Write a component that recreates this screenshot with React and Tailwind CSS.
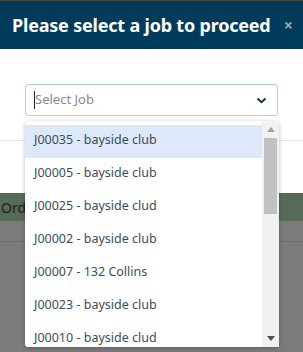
import React from "react";

const items = [
  "J00035 - bayside club",
  "J00005 - bayside club",
  "J00025 - bayside clud",
  "J00002 - bayside club",
  "J00007 - 132 Collins",
  "J00023 - bayside club",
  "J00010 - bayside clud",
];

export default function App() {
  return (
    <div className="relative w-[303px] h-[352px] overflow-hidden bg-[#7b7b7b]" style={{ fontFamily: "'Noto Sans', 'Open Sans', sans-serif" }}>
      <div className="h-px bg-[#4a473c]" />
      <div className="h-[48px] bg-[#003b5c] flex items-center justify-between pl-[12px] pr-[10px]">
        <span className="text-white font-bold text-[18px] tracking-[-0.2px] leading-none">Please select a job to proceed</span>
        <span className="text-[#9aa7b0] font-bold text-[16px] leading-none">×</span>
      </div>
      <div className="bg-white">
        <div className="h-[92px] border-b border-[#e5e5e5] pt-[35px] px-[25px]">
          <div className="h-[32px] border border-[#a6d9b5] rounded-[3px] flex items-center pl-[8px] pr-[10px]">
            <span className="w-px h-[18px] bg-[#222]" />
            <span className="text-[#8a8a8a] text-[13px] flex-1">Select Job</span>
            <svg width="11" height="7" viewBox="0 0 11 7">
              <path d="M1.5 1.5 L5.5 5.2 L9.5 1.5" stroke="#1d3347" strokeWidth="2" fill="none" />
            </svg>
          </div>
        </div>
        <div className="h-[52px]" />
      </div>
      <div className="h-[28px] bg-[#556b58] flex items-center">
        <span className="text-[#1e1e1e] text-[14px] pl-[1px]">Order</span>
      </div>
      <div className="h-[21px] border-b border-[#6e6e6e]" />

      <div className="absolute left-[25px] top-[121px] w-[254px] h-[226px] bg-white rounded-[3px] shadow-[0_1px_4px_rgba(0,0,0,0.25)] flex">
        <div className="flex-1 pt-[4px]">
          {items.map((t, i) => (
            <div
              key={t}
              className={`h-[33px] flex items-center pl-[9px] pb-[2px] text-[12.5px] text-[#3a4d5c] ${i === 0 ? "bg-[#dde8fb]" : ""}`}
            >
              {t}
            </div>
          ))}
        </div>
        <div className="w-[17px] bg-[#f1f1f1] flex flex-col items-center">
          <div className="h-[17px] flex items-center justify-center">
            <svg width="8" height="5" viewBox="0 0 8 5"><path d="M0 5 L4 0 L8 5 Z" fill="#a3a3a3" /></svg>
          </div>
          <div className="w-[13px] h-[76px] bg-[#c1c1c1]" />
          <div className="flex-1" />
          <div className="h-[17px] flex items-center justify-center">
            <svg width="8" height="5" viewBox="0 0 8 5"><path d="M0 0 L8 0 L4 5 Z" fill="#505050" /></svg>
          </div>
        </div>
      </div>
    </div>
  );
}
